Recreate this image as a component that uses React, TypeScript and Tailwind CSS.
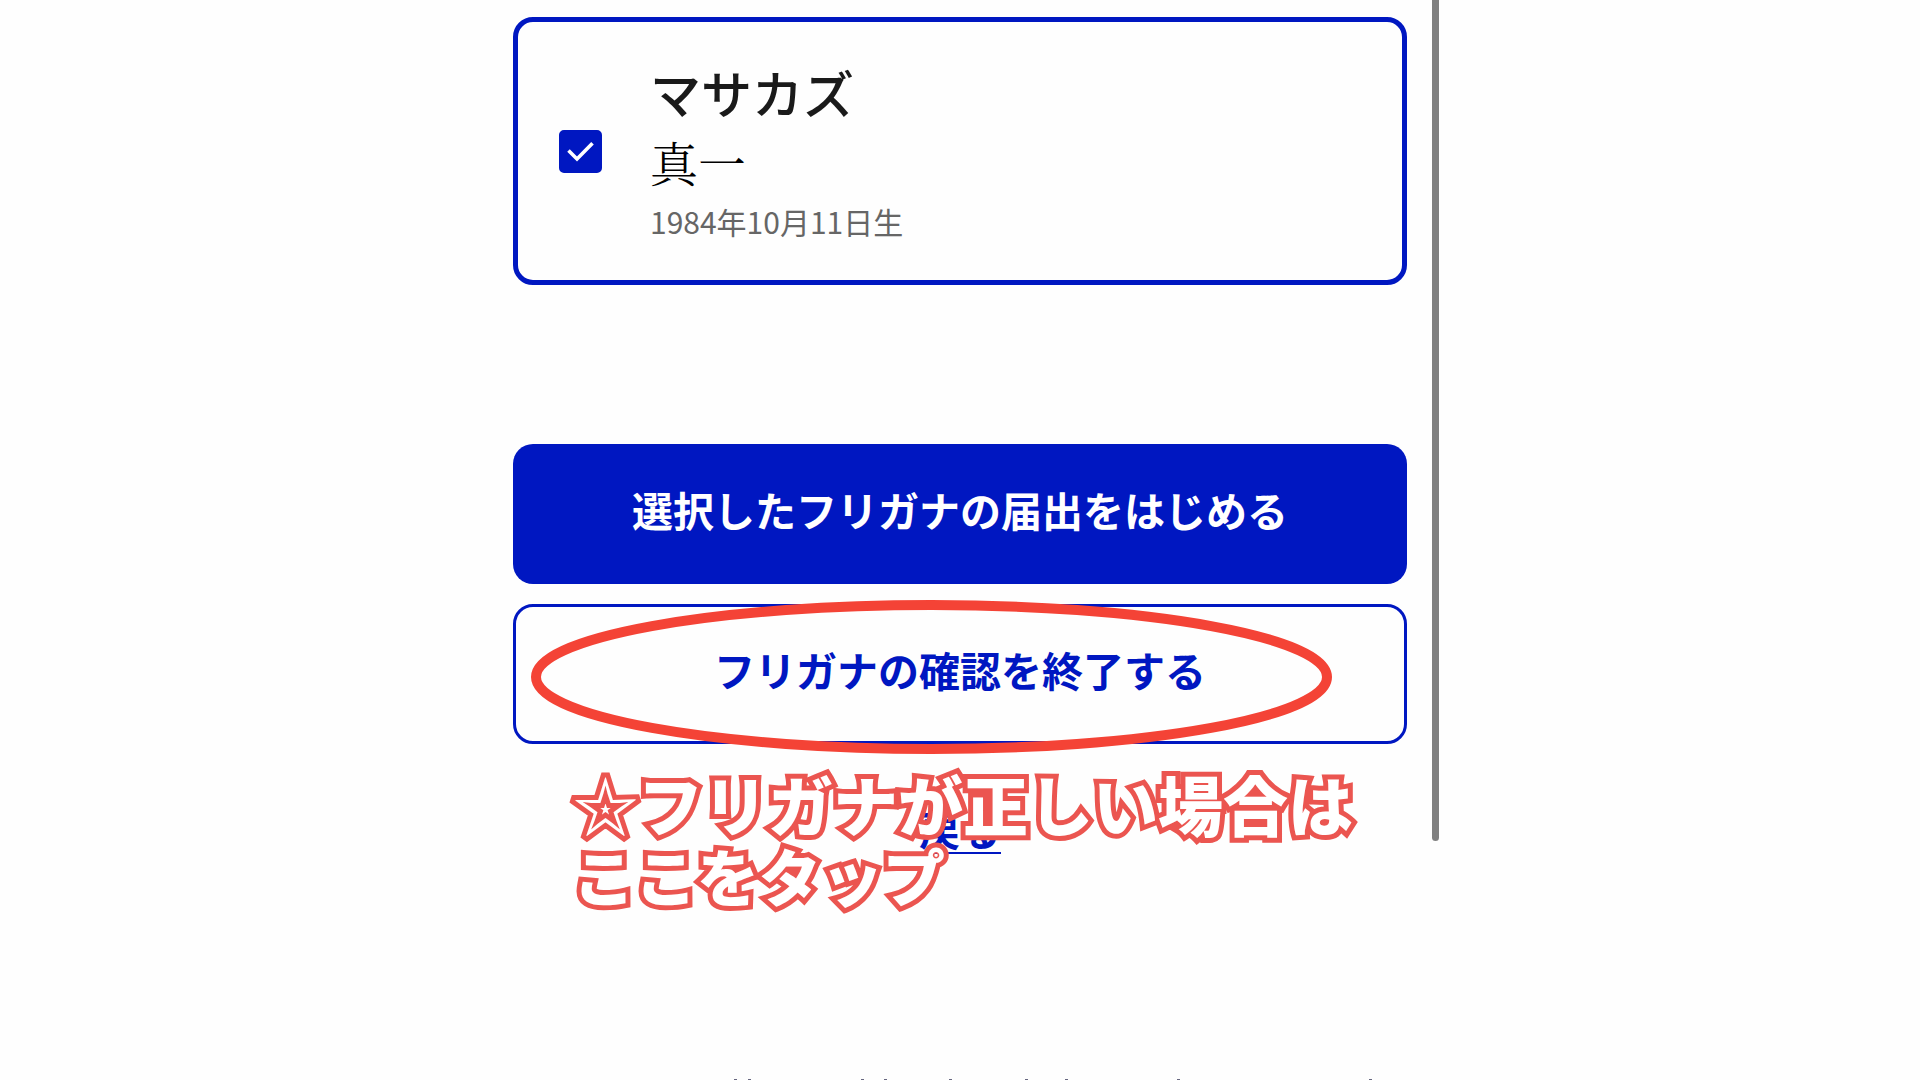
import { useState } from "react";

const TAPERS = [735, 749, 862, 885, 950, 1026, 1066, 1178, 1370];

function PersonCard() {
  const [checked, setChecked] = useState(true);

  return (
    <label
      htmlFor="person"
      className="flex cursor-pointer items-center gap-12 rounded-[20px] border-[5px] border-[#0017c1] py-[35px] pl-[41px] pr-10"
    >
      <span className="grid shrink-0 place-items-center">
        <input
          id="person"
          type="checkbox"
          checked={checked}
          onChange={(event) => setChecked(event.target.checked)}
          className="col-start-1 row-start-1 size-[43px] appearance-none rounded-[5px] border-2 border-[#0017c1] bg-white checked:bg-[#0017c1]"
        />
        {checked && (
          <svg
            viewBox="0 0 43 43"
            className="pointer-events-none col-start-1 row-start-1 size-[43px]"
            fill="none"
            stroke="white"
            strokeWidth="3.6"
            aria-hidden="true"
          >
            <path d="M9.5 20.5 18 29 33.5 13.2" />
          </svg>
        )}
      </span>
      <span className="flex flex-col">
        <span className="text-[51px] font-medium leading-[70px] text-[#1a1a1a]">マサカズ</span>
        <span className="font-['Noto_Serif_CJK_JP','Noto_Sans_CJK_JP',serif] text-[48px] font-light leading-[70px] text-black">
          真一
        </span>
        <span className="text-[30px] leading-[48px] text-[#666666]">1984年10月11日生</span>
      </span>
    </label>
  );
}

function Annotation() {
  return (
    <div className="pointer-events-none absolute inset-x-0 -top-1">
      <svg viewBox="0 0 894 156" className="block w-full" fill="none" aria-hidden="true">
        <ellipse cx="418.5" cy="77" rx="395.5" ry="72" stroke="#f44336" strokeWidth="10" />
      </svg>
      <p className="mt-[11px] whitespace-nowrap pl-[60px] font-black leading-[72px] text-white [paint-order:stroke_fill] [-webkit-text-stroke:10px_#eb5550]">
        <span className="block text-[65px]">☆フリガナが正しい場合は</span>
        <span className="block text-[62px]">ここをタップ</span>
      </p>
    </div>
  );
}

export default function App() {
  return (
    <div className="flex min-h-screen flex-col bg-[#fefefe] font-['Noto_Sans_CJK_JP',sans-serif]">
      <main className="relative mx-auto w-full max-w-[894px] pt-[17px]">
        <PersonCard />

        <div className="mt-[159px] flex flex-col gap-5">
          <button
            type="button"
            className="h-[140px] rounded-[20px] bg-[#0017c1] pb-2 text-[41px] font-bold text-white"
          >
            選択したフリガナの届出をはじめる
          </button>
          <div className="relative">
            <button
              type="button"
              className="h-[140px] w-full rounded-[20px] border-[3px] border-[#0017c1] bg-[#fefefe] pb-2 text-[41px] font-bold text-[#0017c1]"
            >
              フリガナの確認を終了する
            </button>
            <a
              href="#back"
              className="mx-auto mt-[54px] block w-fit text-[41px] font-bold leading-[60px] text-[#0017c1] underline decoration-2 underline-offset-[6px]"
            >
              戻る
            </a>
            <Annotation />
          </div>
        </div>

        {/* scroll thumb */}
        <div className="absolute -right-8 top-0 h-[841px] w-[7px] rounded-b-full bg-[#808080]" />
      </main>

      {/* upper edge of the next line, cut by the fold */}
      <svg viewBox="0 0 1920 1" className="mt-auto block w-full" aria-hidden="true">
        {TAPERS.map((x) => (
          <rect key={x} x={x - 1} y="0" width="3" height="1" fill="#66667f" />
        ))}
      </svg>
    </div>
  );
}
